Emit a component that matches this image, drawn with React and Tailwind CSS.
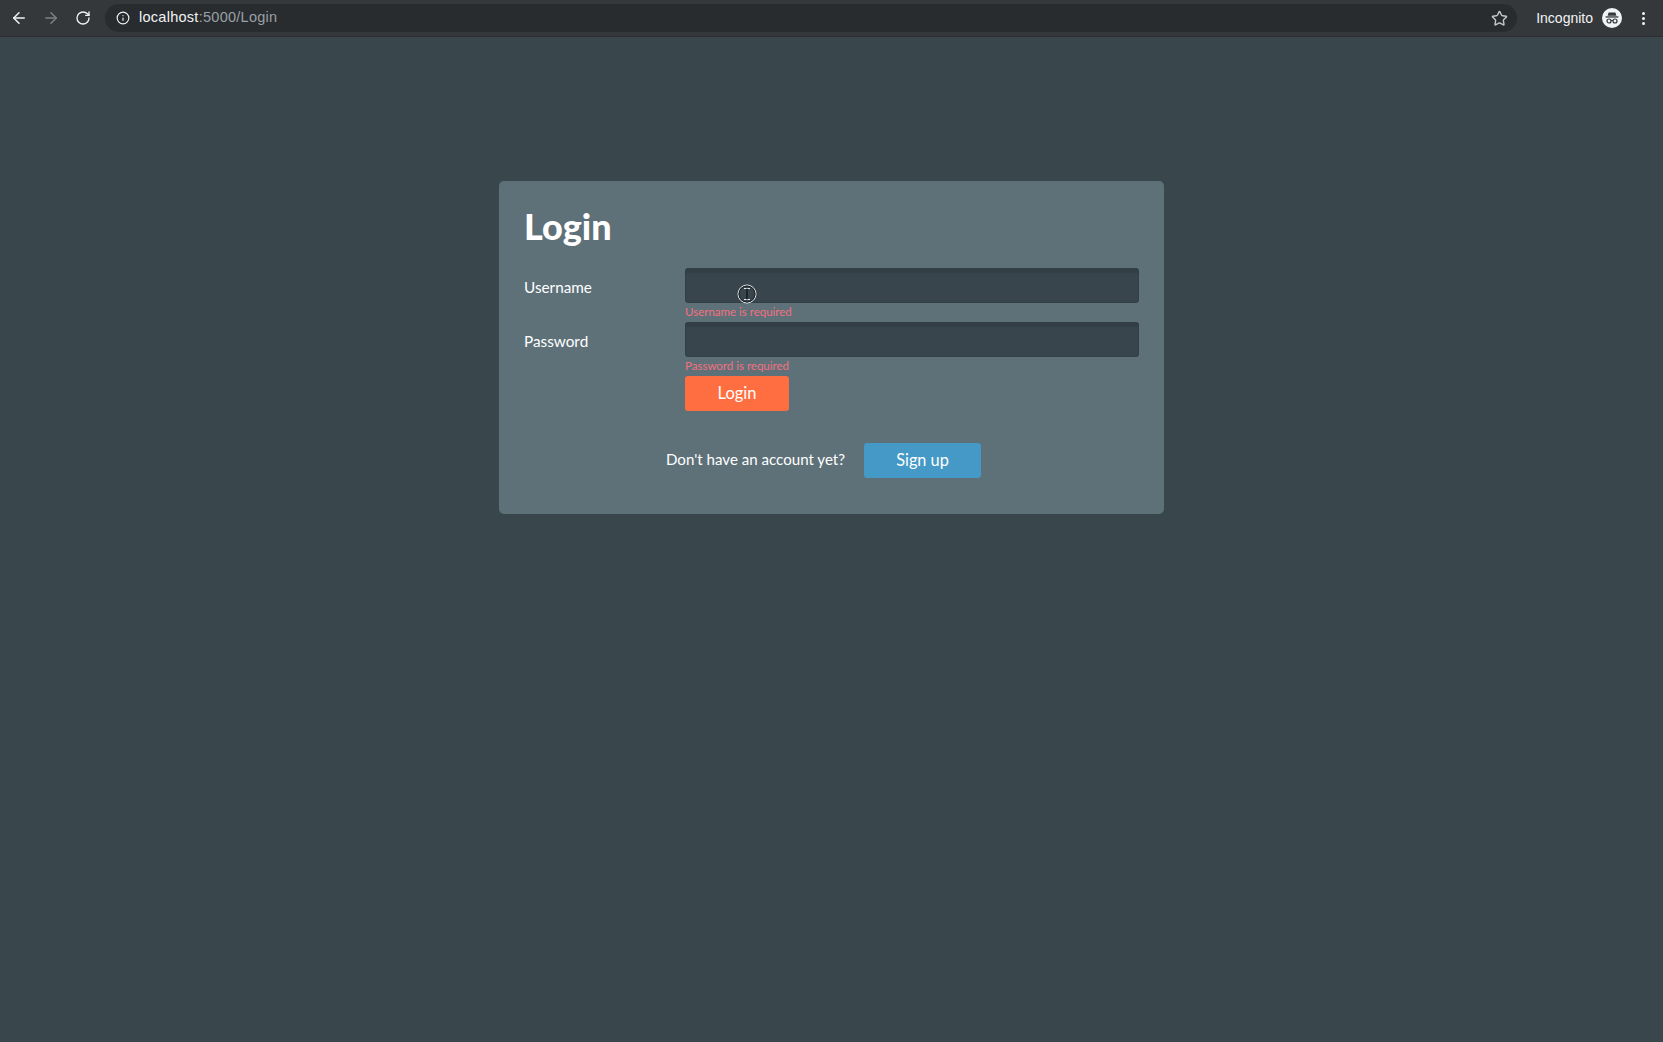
import { ArrowLeft, ArrowRight, RotateCw, Info, Star } from 'lucide-react'

function IncognitoIcon() {
  return (
    <svg width="20" height="20" viewBox="0 0 20 20">
      <circle cx="10" cy="10" r="10" fill="#f1f3f4" />
      <path d="M6.6 4.6h6.8l1 3.2H5.6z" fill="#35383b" />
      <rect x="3.6" y="8.3" width="12.8" height="1.3" fill="#35383b" />
      <circle cx="7" cy="13" r="2" fill="none" stroke="#35383b" strokeWidth="1.2" />
      <circle cx="13" cy="13" r="2" fill="none" stroke="#35383b" strokeWidth="1.2" />
      <path d="M9 12.6c.7-.4 1.3-.4 2 0" fill="none" stroke="#35383b" strokeWidth="1" />
    </svg>
  )
}

function TextCursor() {
  return (
    <svg className="absolute left-[52px] top-[16px] pointer-events-none" width="20" height="20" viewBox="0 0 20 20">
      <circle cx="10" cy="10" r="9" fill="none" stroke="#e8ecee" strokeWidth="1" />
      <circle cx="10" cy="10" r="8" fill="none" stroke="#1c2326" strokeWidth="1" />
      <path d="M7 4.5h6M7 15.5h6" stroke="#e8ecee" strokeWidth="1" />
      <path d="M10 4.5v11" stroke="#10151a" strokeWidth="1.4" />
    </svg>
  )
}

function Field({ label, error, cursor }) {
  return (
    <div className="grid grid-cols-[161px_1fr]">
      <label className="pt-[7px] text-[15.3px] leading-[24px] text-white">{label}</label>
      <div>
        <div className="relative">
          <input className="block w-full h-[35px] rounded-[4px] bg-[#38454c] shadow-[inset_0_5px_0_#323f46,inset_0_0_0_1px_#323f46] outline-none" />
          {cursor && <TextCursor />}
        </div>
        <p className="h-[19px] text-[11.5px] leading-[17px] text-[#f4707f]">{error}</p>
      </div>
    </div>
  )
}

export default function App() {
  return (
    <div className="h-[1042px] overflow-hidden bg-[#39464c] font-['Lato','Noto_Sans',sans-serif]">
      <div className="flex items-center h-[37px] bg-[#35383b] border-b border-[#2b2f31] pl-[10px] pr-[18px] font-['Liberation_Sans',sans-serif]">
        <ArrowLeft size={18} strokeWidth={2} className="text-[#f1f3f4]" />
        <ArrowRight size={18} strokeWidth={2} className="ml-[14px] text-[#7d8083]" />
        <RotateCw size={16} strokeWidth={2} className="ml-[15px] text-[#f1f3f4]" />
        <div className="ml-[14px] flex items-center flex-1 h-[28px] rounded-full bg-[#282c2f] pl-[11px] pr-[9px]">
          <Info size={14} strokeWidth={2} className="text-[#f1f3f4]" />
          <span className="ml-[9px] text-[14.5px] tracking-[0.27px] text-[#f1f3f4]">
            localhost<span className="text-[#9aa0a6]">:5000/Login</span>
          </span>
          <Star size={17} strokeWidth={2} className="ml-auto text-[#c4c7ca]" />
        </div>
        <span className="ml-[19px] text-[14px] text-[#f1f3f4]">Incognito</span>
        <div className="ml-[9px]"><IncognitoIcon /></div>
        <div className="ml-[20px] flex flex-col gap-[2px]">
          <span className="block w-[3px] h-[3px] rounded-full bg-[#f1f3f4]" />
          <span className="block w-[3px] h-[3px] rounded-full bg-[#f1f3f4]" />
          <span className="block w-[3px] h-[3px] rounded-full bg-[#f1f3f4]" />
        </div>
      </div>

      <div className="mx-auto mt-[144px] w-[665px] rounded-[5px] bg-[#5e7179] px-[25px] pt-[25px] pb-[36px]">
        <h1 className="h-[62px] text-[36px] leading-[40px] font-black text-white">Login</h1>
        <Field label="Username" error="Username is required" cursor />
        <Field label="Password" error="Password is required" />
        <div className="pl-[161px]">
          <button className="block w-[104px] h-[35px] rounded-[3px] bg-[#ff6e40] text-[16.5px] text-white">Login</button>
        </div>
        <div className="mt-[32px] flex items-center pl-[142px]">
          <span className="-mt-[3px] text-[15.1px] text-white">Don't have an account yet?</span>
          <button className="ml-[19px] w-[117px] h-[35px] rounded-[3px] bg-[#4499c6] text-[16.3px] text-white">Sign up</button>
        </div>
      </div>
    </div>
  )
}
